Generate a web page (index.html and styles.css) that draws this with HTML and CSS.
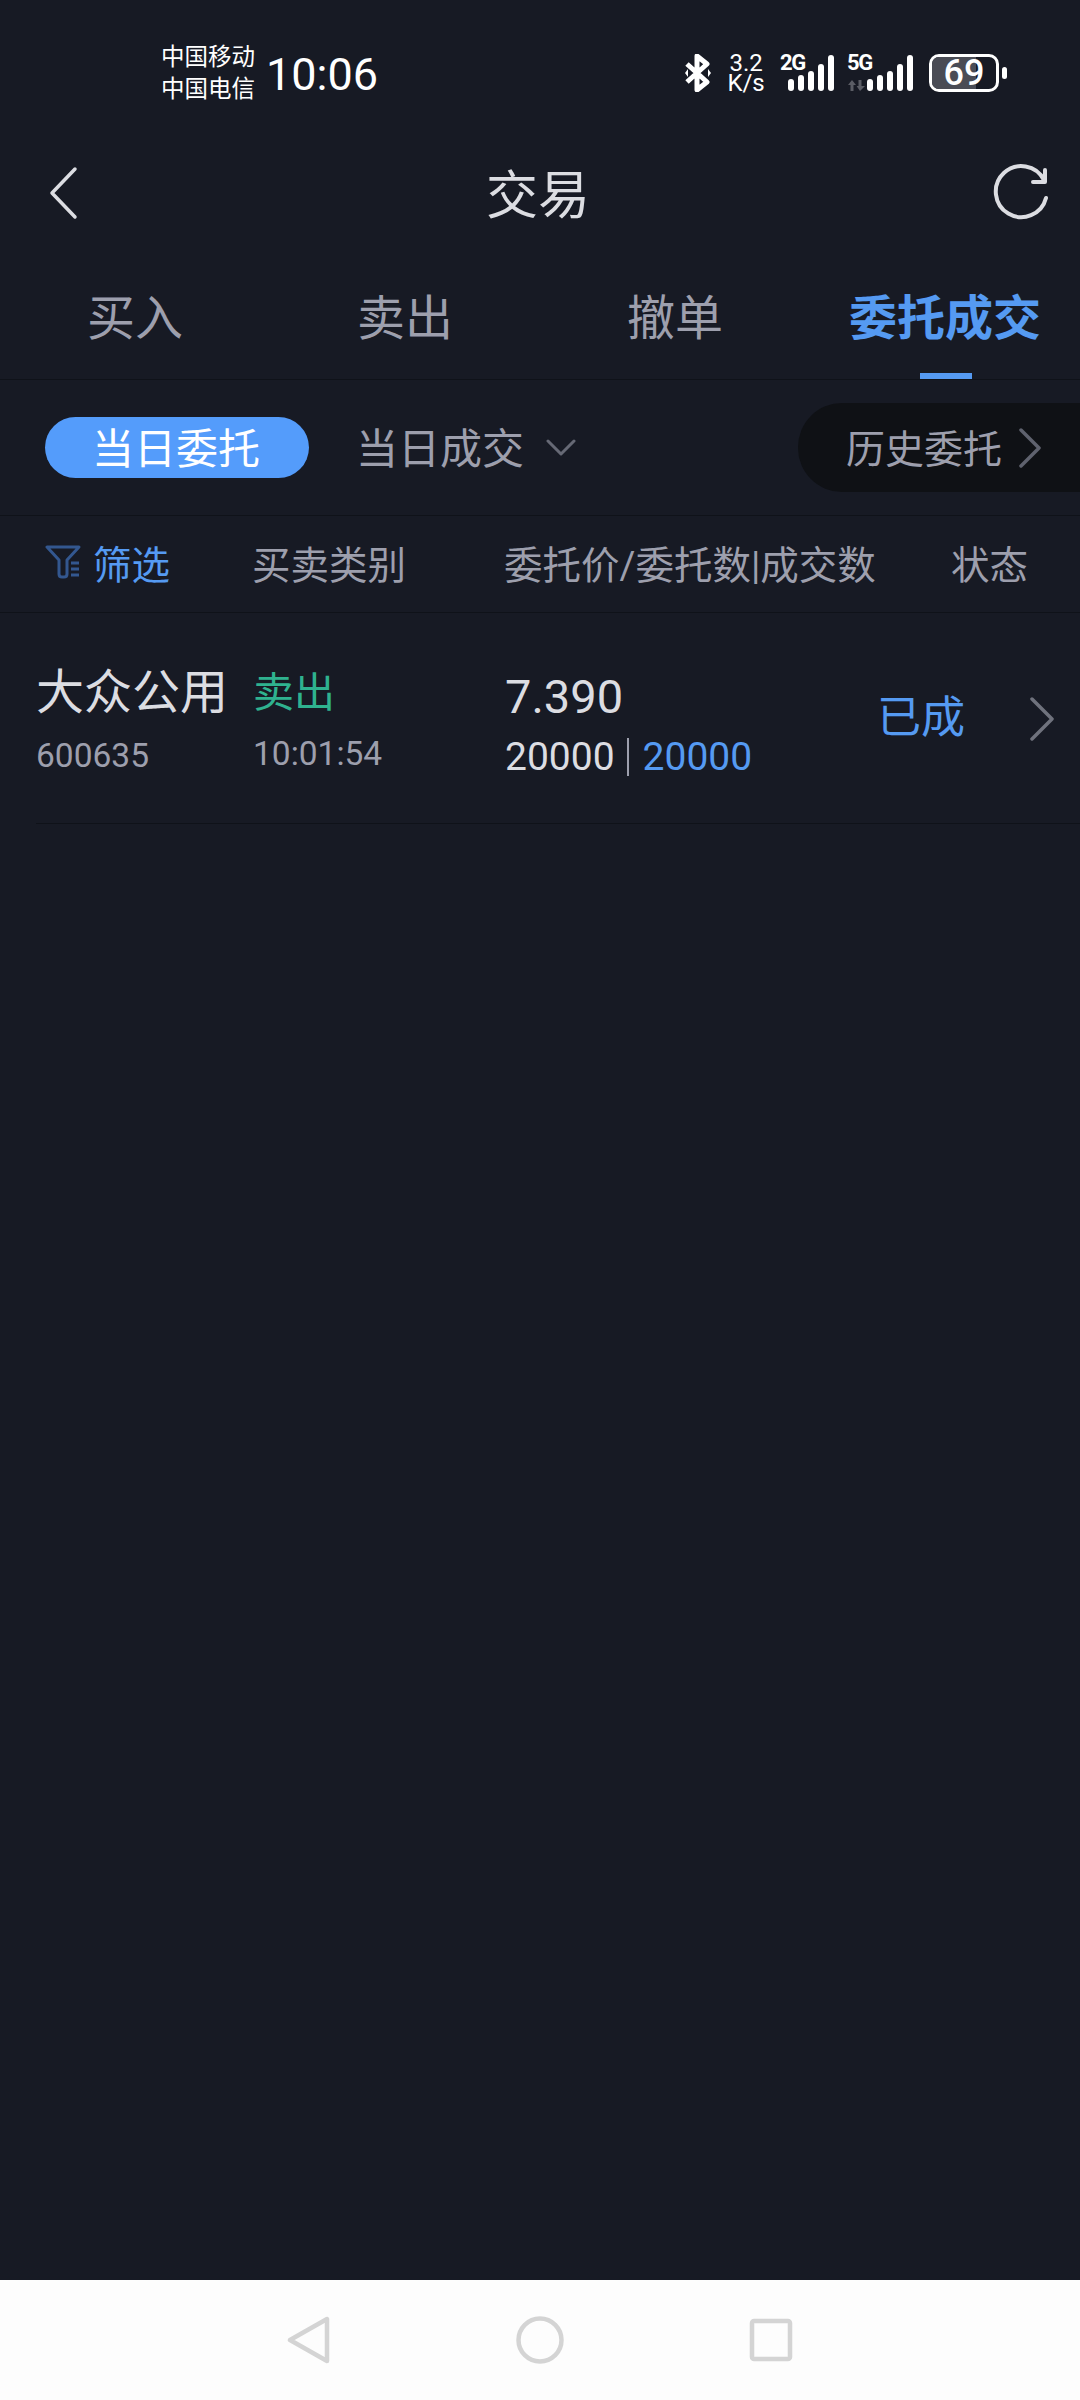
FILE: index.html
```html
<!doctype html>
<html lang="zh-Hans">
<head>
    <meta charset="utf-8">
    <meta name="viewport" content="width=device-width, initial-scale=1.0">
    <title>交易</title>
    <link rel="stylesheet" href="styles.css">
</head>

<body>
    <div class="screen">
        <!-- 状态栏 -->
        <div class="status-bar">
            <div class="carriers"><span>中国移动</span><span>中国电信</span></div>
            <div class="clock">10:06</div>
            <div class="status-icons">
                <svg class="bt-icon" width="28" height="38" viewBox="0 0 28 38">
                    <path d="M3 10 L23 28 L13 36 L13 2 L23 10 L3 28" fill="none" stroke="#fff" stroke-width="5" stroke-linejoin="round"/>
                    <path d="M24 15 L27 19 L24 23Z M4 15 L1 19 L4 23Z" fill="#fff"/>
                </svg>
                <div class="net-speed"><span>3.2</span><span>K/s</span></div>
                <div class="signal">
                    <span class="signal-tag">2G</span>
                    <svg width="48" height="36" viewBox="0 0 48 36">
                        <rect x="1" y="24" width="6" height="12" rx="3"/>
                        <rect x="11" y="20" width="6" height="16" rx="3"/>
                        <rect x="21" y="16" width="6" height="20" rx="3"/>
                        <rect x="31" y="9" width="6" height="27" rx="3"/>
                        <rect x="41" y="0" width="6" height="36" rx="3"/>
                    </svg>
                </div>
                <div class="signal signal-second">
                    <span class="signal-tag">5G</span>
                    <svg class="data-arrows" width="17" height="11" viewBox="0 0 17 11">
                        <path d="M4 0 L8 5 H5.5 V11 H2.5 V5 H0Z M12 11 L8.6 6 H10.5 V0 H13.5 V6 H17Z" fill="#5b5d65"/>
                    </svg>
                    <svg width="48" height="36" viewBox="0 0 48 36">
                        <rect x="1" y="24" width="6" height="12" rx="3"/>
                        <rect x="11" y="20" width="6" height="16" rx="3"/>
                        <rect x="21" y="16" width="6" height="20" rx="3"/>
                        <rect x="31" y="9" width="6" height="27" rx="3"/>
                        <rect x="41" y="0" width="6" height="36" rx="3"/>
                    </svg>
                </div>
                <div class="battery">
                    <div class="battery-body">
                        <div class="battery-fill"></div>
                        <span class="battery-num">69</span>
                    </div>
                    <div class="battery-nub"></div>
                </div>
            </div>
        </div>

        <!-- 标题栏 -->
        <div class="nav-bar">
            <svg width="32" height="54" viewBox="0 0 32 54">
                <path d="M28 3 L5 27 L28 51" fill="none" stroke="#dcdde2" stroke-width="3.5" stroke-linecap="round" stroke-linejoin="round"/>
            </svg>
            <div class="nav-title">交易</div>
            <svg width="56" height="58" viewBox="0 0 56 58">
                <path d="M51 16 A25.5 25.5 0 1 0 53 34" fill="none" stroke="#dcdde2" stroke-width="4" stroke-linecap="round"/>
                <path d="M52 6 V18 H40" fill="none" stroke="#dcdde2" stroke-width="4" stroke-linecap="round" stroke-linejoin="round"/>
            </svg>
        </div>

        <!-- 买卖切换 -->
        <div class="tabs">
            <div class="tab">买入</div>
            <div class="tab">卖出</div>
            <div class="tab">撤单</div>
            <div class="tab active">委托成交</div>
        </div>

        <!-- 委托类型 -->
        <div class="filter-row">
            <div class="pill">当日委托</div>
            <div class="dropdown">
                <span>当日成交</span>
                <svg width="32" height="18" viewBox="0 0 32 18">
                    <path d="M3 2 L16 15 L29 2" fill="none" stroke="#666975" stroke-width="3" stroke-linecap="round" stroke-linejoin="round"/>
                </svg>
            </div>
            <div class="history">
                <span>历史委托</span>
                <svg width="24" height="40" viewBox="0 0 24 40">
                    <path d="M3 2 L21 20 L3 38" fill="none" stroke="#5f626e" stroke-width="3.5" stroke-linecap="round" stroke-linejoin="round"/>
                </svg>
            </div>
        </div>

        <!-- 表头 -->
        <div class="table-head">
            <div class="col-filter">
                <svg width="36" height="34" viewBox="0 0 36 34">
                    <path d="M2 2 H34 L22 15 V29 Q22 32 19 32 H17 Q14 32 14 29 V15Z" fill="none" stroke="#33578f" stroke-width="3" stroke-linejoin="round"/>
                    <path d="M26 18 H34 M26 24 H34 M26 30 H34" stroke="#33578f" stroke-width="3"/>
                </svg>
                <span>筛选</span>
            </div>
            <div>买卖类别</div>
            <div>委托价/委托数|成交数</div>
            <div>状态</div>
        </div>

        <!-- 委托记录 -->
        <div class="order-row">
            <div class="order-stock">
                <div class="stock-name">大众公用</div>
                <div class="stock-code">600635</div>
            </div>
            <div class="order-side">
                <div class="side-text">卖出</div>
                <div class="side-time">10:01:54</div>
            </div>
            <div class="order-price">
                <div class="price-value">7.390</div>
                <div class="price-nums">20000<span class="sep"></span><span class="done-num">20000</span></div>
            </div>
            <div class="order-state">已成</div>
            <svg class="row-arrow" width="26" height="44" viewBox="0 0 26 44">
                <path d="M3 2 L23 22 L3 42" fill="none" stroke="#6f727d" stroke-width="3.5" stroke-linecap="round" stroke-linejoin="round"/>
            </svg>
        </div>

        <div class="content-empty"></div>

        <!-- 系统导航栏 -->
        <div class="system-bar">
            <svg width="44" height="48" viewBox="0 0 44 48">
                <path d="M40 3 V45 L3 24Z" fill="none" stroke="#d4d4d4" stroke-width="4.5" stroke-linejoin="round"/>
            </svg>
            <svg width="48" height="48" viewBox="0 0 48 48">
                <circle cx="24" cy="24" r="21.5" fill="none" stroke="#d4d4d4" stroke-width="4.5"/>
            </svg>
            <svg width="44" height="44" viewBox="0 0 44 44">
                <rect x="3" y="3" width="38" height="38" rx="2" fill="none" stroke="#d4d4d4" stroke-width="4.5"/>
            </svg>
        </div>
    </div>
</body>
</html>
```

FILE: styles.css
```css
* {
    box-sizing: border-box;
}
body {
    font-family: Roboto, "Noto Sans CJK SC", sans-serif;
    background-color: #171a24;
    margin: 0;
}
.screen {
    width: 1080px;
    height: 2400px;
    display: flex;
    flex-direction: column;
    overflow: hidden;
}

/* status bar */
.status-bar {
    height: 130px;
    flex-shrink: 0;
    display: flex;
    align-items: center;
    padding: 16px 0 0 161px;
    color: #fff;
}
.carriers {
    display: flex;
    flex-direction: column;
    font-size: 23.5px;
    line-height: 32px;
    width: 105px;
}
.clock {
    font-size: 45px;
    padding-top: 2px;
}
.status-icons {
    margin-left: 306px;
    display: flex;
    align-items: center;
}
.net-speed {
    display: flex;
    flex-direction: column;
    align-items: center;
    font-size: 24px;
    line-height: 20px;
    margin-left: 14px;
    width: 40px;
}
.signal {
    position: relative;
    margin-left: 15px;
    width: 54px;
    height: 36px;
    display: flex;
    justify-content: flex-end;
    fill: #fff;
}
.signal-second {
    margin-left: 13px;
    width: 66px;
}
.signal-tag {
    position: absolute;
    left: -1px;
    top: -2px;
    font-size: 22px;
    line-height: 20px;
    font-weight: 700;
    letter-spacing: -1.5px;
}
.data-arrows {
    position: absolute;
    left: 0;
    bottom: 0;
}
.battery {
    margin-left: 15px;
    display: flex;
    align-items: center;
    gap: 3px;
}
.battery-body {
    position: relative;
    width: 70px;
    height: 38px;
    border: 3px solid #fff;
    border-radius: 10px;
    text-align: center;
}
.battery-fill {
    position: absolute;
    left: 0;
    top: 0;
    bottom: 0;
    width: 69%;
    border-radius: 7px 0 0 7px;
    background-color: #4a4c55;
}
.battery-num {
    position: relative;
    font-size: 36px;
    line-height: 32px;
    font-weight: 500;
}
.battery-nub {
    width: 5px;
    height: 12px;
    border-radius: 3px;
    background-color: #fff;
}

/* title bar */
.nav-bar {
    height: 126px;
    flex-shrink: 0;
    display: flex;
    align-items: center;
    justify-content: space-between;
    padding: 0 31px 0 47px;
}
.nav-title {
    font-size: 52px;
    color: #dcdde2;
    margin: 0 0 3px 4px;
}

/* tabs */
.tabs {
    height: 124px;
    flex-shrink: 0;
    display: grid;
    grid-template-columns: 270px 270px 270px 270px;
    border-bottom: 1px solid #0f1219;
    padding-bottom: 2px;
}
.tab {
    position: relative;
    display: flex;
    justify-content: center;
    align-items: center;
    font-size: 48px;
    color: #9d9fad;
    padding-bottom: 5px;
}
.tab.active {
    font-weight: 700;
    color: #559af2;
}
.tab.active::after {
    content: "";
    position: absolute;
    left: 110px;
    bottom: -2px;
    width: 52px;
    height: 6px;
    background-color: #559af2;
}

/* order type row */
.filter-row {
    height: 136px;
    flex-shrink: 0;
    display: flex;
    align-items: center;
    padding-left: 45px;
    border-bottom: 1px solid #0f1219;
}
.pill {
    width: 264px;
    height: 61px;
    border-radius: 31px;
    background-color: #549cfb;
    color: #fff;
    font-size: 42px;
    display: flex;
    align-items: center;
    justify-content: center;
    padding: 0 2px 5px 0;
}
.dropdown {
    margin-left: 47px;
    display: flex;
    align-items: center;
    gap: 21px;
    font-size: 42px;
    color: #9d9fad;
}
.dropdown span {
    padding-bottom: 5px;
}
.history {
    margin-left: auto;
    width: 282px;
    height: 89px;
    border-radius: 44px 0 0 44px;
    background-color: #0f1115;
    color: #9d9fad;
    font-size: 39px;
    display: flex;
    align-items: center;
    gap: 16px;
    padding-left: 48px;
}
.history span {
    padding-bottom: 4px;
}

/* table head */
.table-head {
    height: 97px;
    flex-shrink: 0;
    display: grid;
    grid-template-columns: 252px 252px 447px 1fr;
    align-items: center;
    font-size: 38.5px;
    color: #9d9fad;
    padding-bottom: 4px;
    border-bottom: 1px solid #0f1219;
}
.col-filter {
    display: flex;
    align-items: center;
    gap: 12px;
    padding-left: 45px;
    color: #559af2;
}

/* order row */
.order-row {
    position: relative;
    height: 211px;
    flex-shrink: 0;
    margin-left: 36px;
    display: grid;
    grid-template-columns: 217px 252px 372px 1fr;
    border-bottom: 1px solid #0f1219;
}
.order-stock,
.order-side,
.order-price {
    padding-top: 46px;
}
.stock-name {
    font-size: 48px;
    line-height: 68px;
    color: #dcdde2;
}
.stock-code {
    font-size: 33.5px;
    line-height: 40px;
    margin-top: 9px;
    color: #9d9fad;
}
.side-text {
    font-size: 41px;
    line-height: 68px;
    color: #2fb28f;
}
.side-time {
    font-size: 33.5px;
    line-height: 40px;
    margin-top: 7px;
    color: #9d9fad;
}
.price-value {
    font-size: 47px;
    line-height: 68px;
    color: #dcdde2;
    padding-top: 4px;
}
.price-nums {
    font-size: 39px;
    line-height: 46px;
    margin-top: 3px;
    color: #dcdde2;
    display: flex;
    align-items: center;
}
.sep {
    width: 2px;
    height: 38px;
    margin: 0 13px 0 12px;
    background-color: #9d9fad;
}
.done-num {
    margin-left: 1px;
    color: #559af2;
}
.order-state {
    font-size: 44px;
    line-height: 60px;
    color: #559af2;
    padding-top: 75px;
}
.row-arrow {
    position: absolute;
    right: 25px;
    top: 84px;
}

.content-empty {
    flex: 1;
}

/* system navigation */
.system-bar {
    height: 120px;
    flex-shrink: 0;
    background-color: #fdfdfd;
    display: flex;
    align-items: center;
    justify-content: center;
    gap: 185px;
}
```
